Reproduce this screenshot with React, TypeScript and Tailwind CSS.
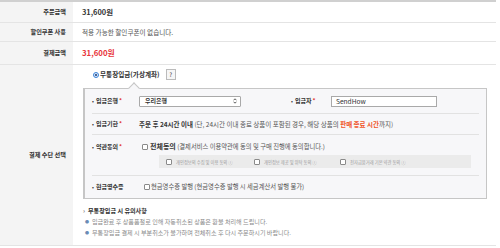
import React from "react";

const Check = () => (
  <span className="inline-block h-[6px] w-[6px] shrink-0 rounded-[1px] border border-[#8a8a8a] bg-white" />
);

const Req = ({ children, star = true }: { children: React.ReactNode; star?: boolean }) => (
  <span className="text-[6px] font-bold text-[#333]">
    <span className="mr-[2px] text-[5px]">•</span>
    {children}
    {star && <span className="ml-[1px] text-[#e2342d]">*</span>}
  </span>
);

function Row({ label, h, children }: { label: string; h: string; children: React.ReactNode }) {
  return (
    <div className={`flex border-b border-[#e4e4e4] ${h}`}>
      <div className="flex w-[73px] shrink-0 items-center justify-end bg-[#f4f4f4] pr-[7px] text-[6.2px] font-bold text-[#333]">
        {label}
      </div>
      <div className="flex flex-1 items-center pl-[9px]">{children}</div>
    </div>
  );
}

export default function App() {
  return (
    <div className="h-[248px] w-[500px] overflow-hidden bg-white font-['Noto_Sans_CJK_KR','Noto_Sans',sans-serif] text-[6.3px] leading-none text-[#555]">
      <div className="w-[496px] border-t-2 border-[#d0d0d0]">
        <Row label="주문금액" h="h-[21px]">
          <span className="text-[7.4px] font-bold text-[#333]">31,600원</span>
        </Row>
        <Row label="할인쿠폰 사용" h="h-[19px]">
          <span className="text-[6.6px] text-[#555]">적용 가능한 할인쿠폰이 없습니다.</span>
        </Row>
        <Row label="결제금액" h="h-[23px]">
          <span className="text-[7.8px] font-bold text-[#e8353b]">31,600원</span>
        </Row>

        {/* 결제 수단 */}
        <div className="flex h-[181px] border-b border-[#e4e4e4]">
          <div className="flex w-[73px] shrink-0 items-center justify-end bg-[#f4f4f4] pr-[7px] text-[6.2px] font-bold text-[#333]">
            결제 수단 선택
          </div>
          <div className="flex-1 pl-[10px] pt-[4px]">
            <div className="flex h-[11px] items-center pl-[10px]">
              <span className="mr-[1px] flex h-[6px] w-[6px] items-center justify-center rounded-full border border-[#3b82d6] bg-[#dbeafe]">
                <span className="h-[2px] w-[2px] rounded-full bg-[#1e3a6e]" />
              </span>
              <span className="text-[6.6px] font-bold text-[#333]">무통장입금(가상계좌)</span>
              <span className="ml-[6px] flex h-[11px] w-[10px] items-center justify-center border border-[#bbb] bg-[#f6f6f6] text-[6px] text-[#333]">
                ?
              </span>
            </div>

            <div className="relative mt-[8px] w-[404px] border border-l-2 border-[#c6c6c6] bg-[#f7f7f9] px-[7px]">
              <span className="absolute -top-[5px] left-[45px] h-[8px] w-[8px] rotate-45 border-l border-t border-[#c6c6c6] bg-[#f7f7f9]" />

              <div className="flex h-[25px] items-center border-b border-[#e2e2e2]">
                <div className="w-[47px] shrink-0"><Req>입금은행</Req></div>
                <div className="flex h-[11px] w-[102px] items-center justify-between rounded-[1px] border border-[#a9a9a9] bg-white pl-[5px] pr-[3px] text-[6px] font-bold text-[#333]">
                  우리은행
                  <svg width="4" height="6" viewBox="0 0 4 6">
                    <path d="M0.5 2.3 2 0.8 3.5 2.3M0.5 3.7 2 5.2 3.5 3.7" fill="none" stroke="#333" strokeWidth="0.8" />
                  </svg>
                </div>
                <div className="ml-[50px] w-[40px] shrink-0"><Req>입금자</Req></div>
                <div className="flex h-[11px] w-[106px] items-center border border-[#a9a9a9] bg-white pl-[4px] text-[6.6px] text-[#333]">
                  SendHow
                </div>
              </div>

              <div className="flex h-[21px] items-center border-b border-[#e2e2e2]">
                <div className="w-[47px] shrink-0"><Req>입금기한</Req></div>
                <span className="whitespace-nowrap text-[6.5px]">
                  <b className="text-[#333]">주문 후 24시간 이내</b> (단, 24시간 이내 종료 상품이 포함된 경우, 해당 상품의{" "}
                  <b className="text-[#f0552a]">판매 종료 시간</b>까지)
                </span>
              </div>

              <div className="flex h-[41px] border-b border-[#e2e2e2] pt-[8px]">
                <div className="w-[47px] shrink-0 pt-[1px]"><Req>약관동의</Req></div>
                <div className="flex flex-col">
                  <div className="flex items-center gap-[2px] pl-[3px]">
                    <Check />
                    <span className="whitespace-nowrap">
                      <b className="text-[7px] text-[#333]">전체동의</b> (결제서비스 이용약관에 동의 및 구매 진행에 동의합니다.)
                    </span>
                  </div>
                  <div className="ml-[20px] mt-[5px] flex h-[13px] w-[312px] items-center bg-[#ebebeb] pl-[7px] text-[4.3px] text-[#9a9a9a]">
                    <span className="flex w-[88px] items-center gap-[4px]"><Check />개인정보의 수집 및 이용 동의 ⓘ</span>
                    <span className="flex w-[86px] items-center gap-[4px]"><Check />개인정보 제공 및 위탁 동의 ⓘ</span>
                    <span className="flex items-center gap-[4px]"><Check />전자금융거래 기본 약관 동의 ⓘ</span>
                  </div>
                </div>
              </div>

              <div className="flex h-[22px] items-center">
                <div className="w-[47px] shrink-0"><Req star={false}>현금영수증</Req></div>
                <div className="flex items-center gap-[1px] pl-[5px]">
                  <Check />
                  <span className="whitespace-nowrap">현금영수증 발행 (현금영수증 발행 시 세금계산서 발행 불가)</span>
                </div>
              </div>
            </div>

            {/* 유의사항 */}
            <div className="mt-[9px] flex flex-col gap-[5px] text-[6.1px]">
              <div className="flex items-center font-bold text-[#333]">
                <span className="mr-[3px] text-[#777]">›</span>무통장입금 시 유의사항
              </div>
              <div className="flex items-center pl-[2px] text-[#8a8a8a]">
                <span className="mr-[3px] text-[4px] text-[#6b8bb5]">●</span>입금완료 후 상품품절로 인해 자동취소된 상품은 환불 처리해 드립니다.
              </div>
              <div className="flex items-center pl-[2px] text-[#8a8a8a]">
                <span className="mr-[3px] text-[4px] text-[#6b8bb5]">●</span>무통장입금 결제 시 부분취소가 불가하며 전체취소 후 다시 주문하시기 바랍니다.
              </div>
            </div>
          </div>
        </div>
      </div>
    </div>
  );
}
